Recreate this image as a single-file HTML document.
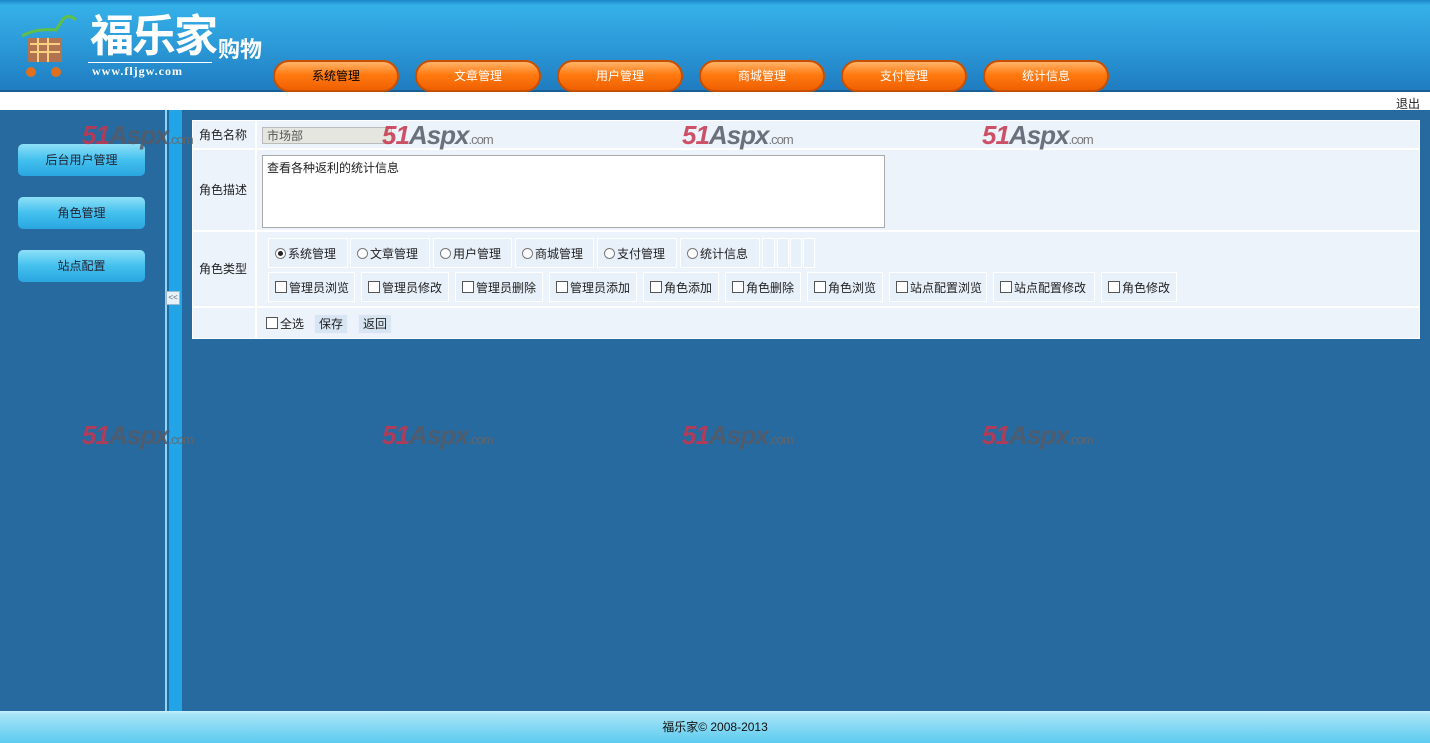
<!DOCTYPE html>
<html><head><meta charset="utf-8"><style>
*{margin:0;padding:0;box-sizing:border-box}
body{width:1430px;height:743px;overflow:hidden;background:#266aa0;font-family:"Liberation Sans","Noto Sans CJK SC",sans-serif;font-size:12px;position:relative;color:#222}
.a{position:absolute}
#hdr{left:0;top:0;width:1430px;height:92px;background:linear-gradient(#1b86c8 0,#35b0e8 6%,#2c9ad8 50%,#1f7cc0 100%);border-bottom:2px solid #1a5f94}
.nav{top:60px;width:126px;height:32px;border-radius:16px;background:linear-gradient(#ffb46a,#ff7a10 45%,#f06000 100%);border:2px solid #c94f00;color:#fff;text-align:center;line-height:28px;font-size:12px}
#strip{left:0;top:92px;width:1430px;height:18px;background:#fff}
.side{left:18px;width:127px;height:32px;border-radius:5px;background:linear-gradient(#8ee0f7,#43c0ee 50%,#2aa6e0);text-align:center;line-height:32px;font-size:12px;color:#223}
.cell{background:#edf3fb;border:1px solid #fff}
.lbl{font-size:12px}
.wm{font-family:"Liberation Sans",sans-serif;font-weight:bold;font-style:italic;font-size:26px;color:#c7344d;letter-spacing:-1px;opacity:.85}
.wm b{color:#555a66}.wm i{font-size:13px;color:#666;font-style:normal;font-weight:normal}
.rc{top:238px;height:30px;line-height:30px;padding-left:6px;border:1px solid #fff;background:#e8f0fa}
.cc{top:272px;height:30px;line-height:30px;padding-left:6px;border:1px solid #fff;background:#e8f0fa}
.rd{display:inline-block;width:11px;height:11px;border:1px solid #777;border-radius:50%;background:#fff;vertical-align:-1px;margin-right:2px;position:relative}
.rd.on:after{content:"";position:absolute;left:2px;top:2px;width:5px;height:5px;border-radius:50%;background:#222}
.ck{display:inline-block;width:12px;height:12px;border:1px solid #555;background:#fff;vertical-align:-1px;margin-right:2px}
</style></head><body>
<div id="hdr" class="a"></div>
<svg class="a" style="left:16px;top:14px" width="64" height="68"><path d="M6 22 Q20 14 40 16 L48 4 Q54 0 60 6" stroke="#5ec04a" stroke-width="3" fill="none"/><rect x="12" y="24" width="34" height="24" fill="#d46a30" opacity=".8"/><path d="M14 30h30M14 38h30M22 24v24M32 24v24" stroke="#f8d080" stroke-width="2"/><circle cx="15" cy="58" r="5" fill="#e07020"/><circle cx="40" cy="58" r="5" fill="#e07020"/></svg>
<div class="a" style="left:90px;top:12px;font-size:44px;font-weight:bold;color:#fff;letter-spacing:-2px;line-height:50px">福乐家</div>
<div class="a" style="left:218px;top:32px;font-size:22px;font-weight:bold;color:#fff">购物</div>
<div class="a" style="left:88px;top:62px;width:124px;border-top:1px solid #fff"></div>
<div class="a" style="left:92px;top:64px;font-family:'Liberation Serif',serif;font-weight:bold;font-size:12px;color:#fff;letter-spacing:1px">www.fljgw.com</div>
<div class="a nav" style="left:273px;color:#000">系统管理</div>
<div class="a nav" style="left:415px">文章管理</div>
<div class="a nav" style="left:557px">用户管理</div>
<div class="a nav" style="left:699px">商城管理</div>
<div class="a nav" style="left:841px">支付管理</div>
<div class="a nav" style="left:983px">统计信息</div>
<div id="strip" class="a"></div>
<div class="a" style="left:1396px;top:95px;font-size:12px">退出</div>
<div class="a side" style="left:18px;top:144px">后台用户管理</div>
<div class="a side" style="top:197px">角色管理</div>
<div class="a side" style="top:250px">站点配置</div>
<div class="a" style="left:165px;top:110px;width:2px;height:601px;background:#8fd6f5"></div>
<div class="a" style="left:167px;top:110px;width:2px;height:601px;background:#1c6aa8"></div>
<div class="a" style="left:169px;top:110px;width:13px;height:601px;background:#22a4e6"></div>
<div class="a" style="left:166px;top:291px;width:14px;height:14px;background:#e8f0f8;border:1px solid #9bc;font-size:8px;line-height:12px;text-align:center;color:#567">&lt;&lt;</div>
<div class="a" style="left:192px;top:120px;width:1228px;height:219px;background:#edf3fb"></div>
<div class="a cell" style="left:192px;top:120px;width:64px;height:29px;line-height:28px;padding-left:6px">角色名称</div>
<div class="a cell" style="left:256px;top:120px;width:1164px;height:29px"></div>
<div class="a" style="left:262px;top:127px;width:130px;height:17px;background:#e6e6e0;border:1px solid #bbb;line-height:16px;padding-left:4px;color:#555">市场部</div>
<div class="a cell" style="left:192px;top:149px;width:64px;height:82px;line-height:80px;padding-left:6px">角色描述</div>
<div class="a cell" style="left:256px;top:149px;width:1164px;height:82px"></div>
<div class="a" style="left:262px;top:155px;width:623px;height:73px;background:#fff;border:1px solid #aaa;padding:3px 4px">查看各种返利的统计信息</div>
<div class="a cell" style="left:192px;top:231px;width:64px;height:76px;line-height:74px;padding-left:6px">角色类型</div>
<div class="a cell" style="left:256px;top:231px;width:1164px;height:76px"></div>
<div class="a rc" style="left:268px;width:80px"><span class="rd on"></span>系统管理</div>
<div class="a rc" style="left:350px;width:80px"><span class="rd"></span>文章管理</div>
<div class="a rc" style="left:433px;width:79px"><span class="rd"></span>用户管理</div>
<div class="a rc" style="left:515px;width:79px"><span class="rd"></span>商城管理</div>
<div class="a rc" style="left:597px;width:80px"><span class="rd"></span>支付管理</div>
<div class="a rc" style="left:680px;width:80px"><span class="rd"></span>统计信息</div>
<div class="a rc" style="left:762px;width:13px"></div><div class="a rc" style="left:777px;width:12px"></div><div class="a rc" style="left:790px;width:12px"></div><div class="a rc" style="left:803px;width:12px"></div>
<div class="a cc" style="left:268px;width:87px"><span class="ck"></span>管理员浏览</div>
<div class="a cc" style="left:361px;width:88px"><span class="ck"></span>管理员修改</div>
<div class="a cc" style="left:455px;width:88px"><span class="ck"></span>管理员删除</div>
<div class="a cc" style="left:549px;width:88px"><span class="ck"></span>管理员添加</div>
<div class="a cc" style="left:643px;width:76px"><span class="ck"></span>角色添加</div>
<div class="a cc" style="left:725px;width:76px"><span class="ck"></span>角色删除</div>
<div class="a cc" style="left:807px;width:76px"><span class="ck"></span>角色浏览</div>
<div class="a cc" style="left:889px;width:98px"><span class="ck"></span>站点配置浏览</div>
<div class="a cc" style="left:993px;width:102px"><span class="ck"></span>站点配置修改</div>
<div class="a cc" style="left:1101px;width:76px"><span class="ck"></span>角色修改</div>
<div class="a cell" style="left:192px;top:307px;width:64px;height:32px"></div>
<div class="a cell" style="left:256px;top:307px;width:1164px;height:32px"></div>
<div class="a" style="left:266px;top:315px"><span class="ck"></span>全选</div>
<div class="a" style="left:314px;top:314px;width:34px;height:20px;background:#d8e6f4;border:1px solid #eef;line-height:19px;text-align:center">保存</div>
<div class="a" style="left:358px;top:314px;width:34px;height:20px;background:#d8e6f4;border:1px solid #eef;line-height:19px;text-align:center">返回</div>
<div class="a wm" style="left:82px;top:120px">51<b>Aspx</b><i>.com</i></div>
<div class="a wm" style="left:382px;top:120px">51<b>Aspx</b><i>.com</i></div>
<div class="a wm" style="left:682px;top:120px">51<b>Aspx</b><i>.com</i></div>
<div class="a wm" style="left:982px;top:120px">51<b>Aspx</b><i>.com</i></div>
<div class="a wm" style="left:82px;top:420px">51<b>Aspx</b><i>.com</i></div>
<div class="a wm" style="left:382px;top:420px">51<b>Aspx</b><i>.com</i></div>
<div class="a wm" style="left:682px;top:420px">51<b>Aspx</b><i>.com</i></div>
<div class="a wm" style="left:982px;top:420px">51<b>Aspx</b><i>.com</i></div>
<div class="a" style="left:0;top:711px;width:1430px;height:32px;background:linear-gradient(#c8f0fc 0,#a6e4f7 10%,#5ccbef 100%);text-align:center;line-height:32px;font-size:12px;color:#111">福乐家© 2008-2013</div>
</body></html>
